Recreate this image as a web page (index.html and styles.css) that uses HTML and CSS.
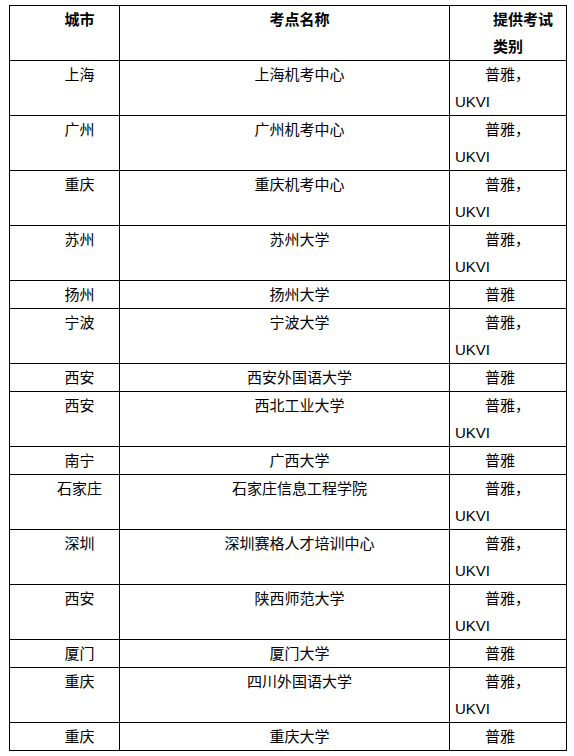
FILE: index.html
```html
<!DOCTYPE html>
<html lang="zh">
<head>
<meta charset="utf-8">
<link rel="stylesheet" href="styles.css">
</head>
<body>
<div class="wrap">
<table class="grid">
<colgroup><col class="c1"><col class="c2"><col class="c3"></colgroup>
<thead>
<tr><th class="city">城市</th><th class="site">考点名称</th><th class="type">提供考试<br>类别</th></tr>
</thead>
<tbody>
<tr><td class="city">上海</td><td class="site">上海机考中心</td><td class="type">普雅，<br>UKVI</td></tr>
<tr><td class="city">广州</td><td class="site">广州机考中心</td><td class="type">普雅，<br>UKVI</td></tr>
<tr><td class="city">重庆</td><td class="site">重庆机考中心</td><td class="type">普雅，<br>UKVI</td></tr>
<tr><td class="city">苏州</td><td class="site">苏州大学</td><td class="type">普雅，<br>UKVI</td></tr>
<tr><td class="city">扬州</td><td class="site">扬州大学</td><td class="type">普雅</td></tr>
<tr><td class="city">宁波</td><td class="site">宁波大学</td><td class="type">普雅，<br>UKVI</td></tr>
<tr><td class="city">西安</td><td class="site">西安外国语大学</td><td class="type">普雅</td></tr>
<tr><td class="city">西安</td><td class="site">西北工业大学</td><td class="type">普雅，<br>UKVI</td></tr>
<tr><td class="city">南宁</td><td class="site">广西大学</td><td class="type">普雅</td></tr>
<tr><td class="city">石家庄</td><td class="site">石家庄信息工程学院</td><td class="type">普雅，<br>UKVI</td></tr>
<tr><td class="city">深圳</td><td class="site">深圳赛格人才培训中心</td><td class="type">普雅，<br>UKVI</td></tr>
<tr><td class="city">西安</td><td class="site">陕西师范大学</td><td class="type">普雅，<br>UKVI</td></tr>
<tr><td class="city">厦门</td><td class="site">厦门大学</td><td class="type">普雅</td></tr>
<tr><td class="city">重庆</td><td class="site">四川外国语大学</td><td class="type">普雅，<br>UKVI</td></tr>
<tr><td class="city">重庆</td><td class="site">重庆大学</td><td class="type">普雅</td></tr>
</tbody>
</table>
</div>
</body>
</html>
```
FILE: styles.css
```css
html, body {
  margin: 0;
  padding: 0;
  background: #fff;
}
.wrap {
  padding: 5px 0 0 9px;
}
.grid {
  border-collapse: separate;
  border-spacing: 0;
  table-layout: fixed;
  width: 558px;
  border-top: 1px solid #000;
  border-left: 1px solid #000;
  font-family: "Liberation Sans", "Noto Sans CJK SC", sans-serif;
  font-size: 15px;
  color: #000;
}
.c1 { width: 110px; }
.c2 { width: 330px; }
.c3 { width: 117px; }
.grid th,
.grid td {
  box-sizing: border-box;
  border-right: 1px solid #000;
  border-bottom: 1px solid #000;
  padding: 0 5px;
  line-height: 27px;
  vertical-align: top;
  text-indent: 2em;
  font-weight: normal;
}
.grid th {
  font-weight: bold;
  text-align: center;
}
.grid td.city,
.grid td.site {
  text-align: center;
}
.grid td.type {
  text-align: left;
}
```
